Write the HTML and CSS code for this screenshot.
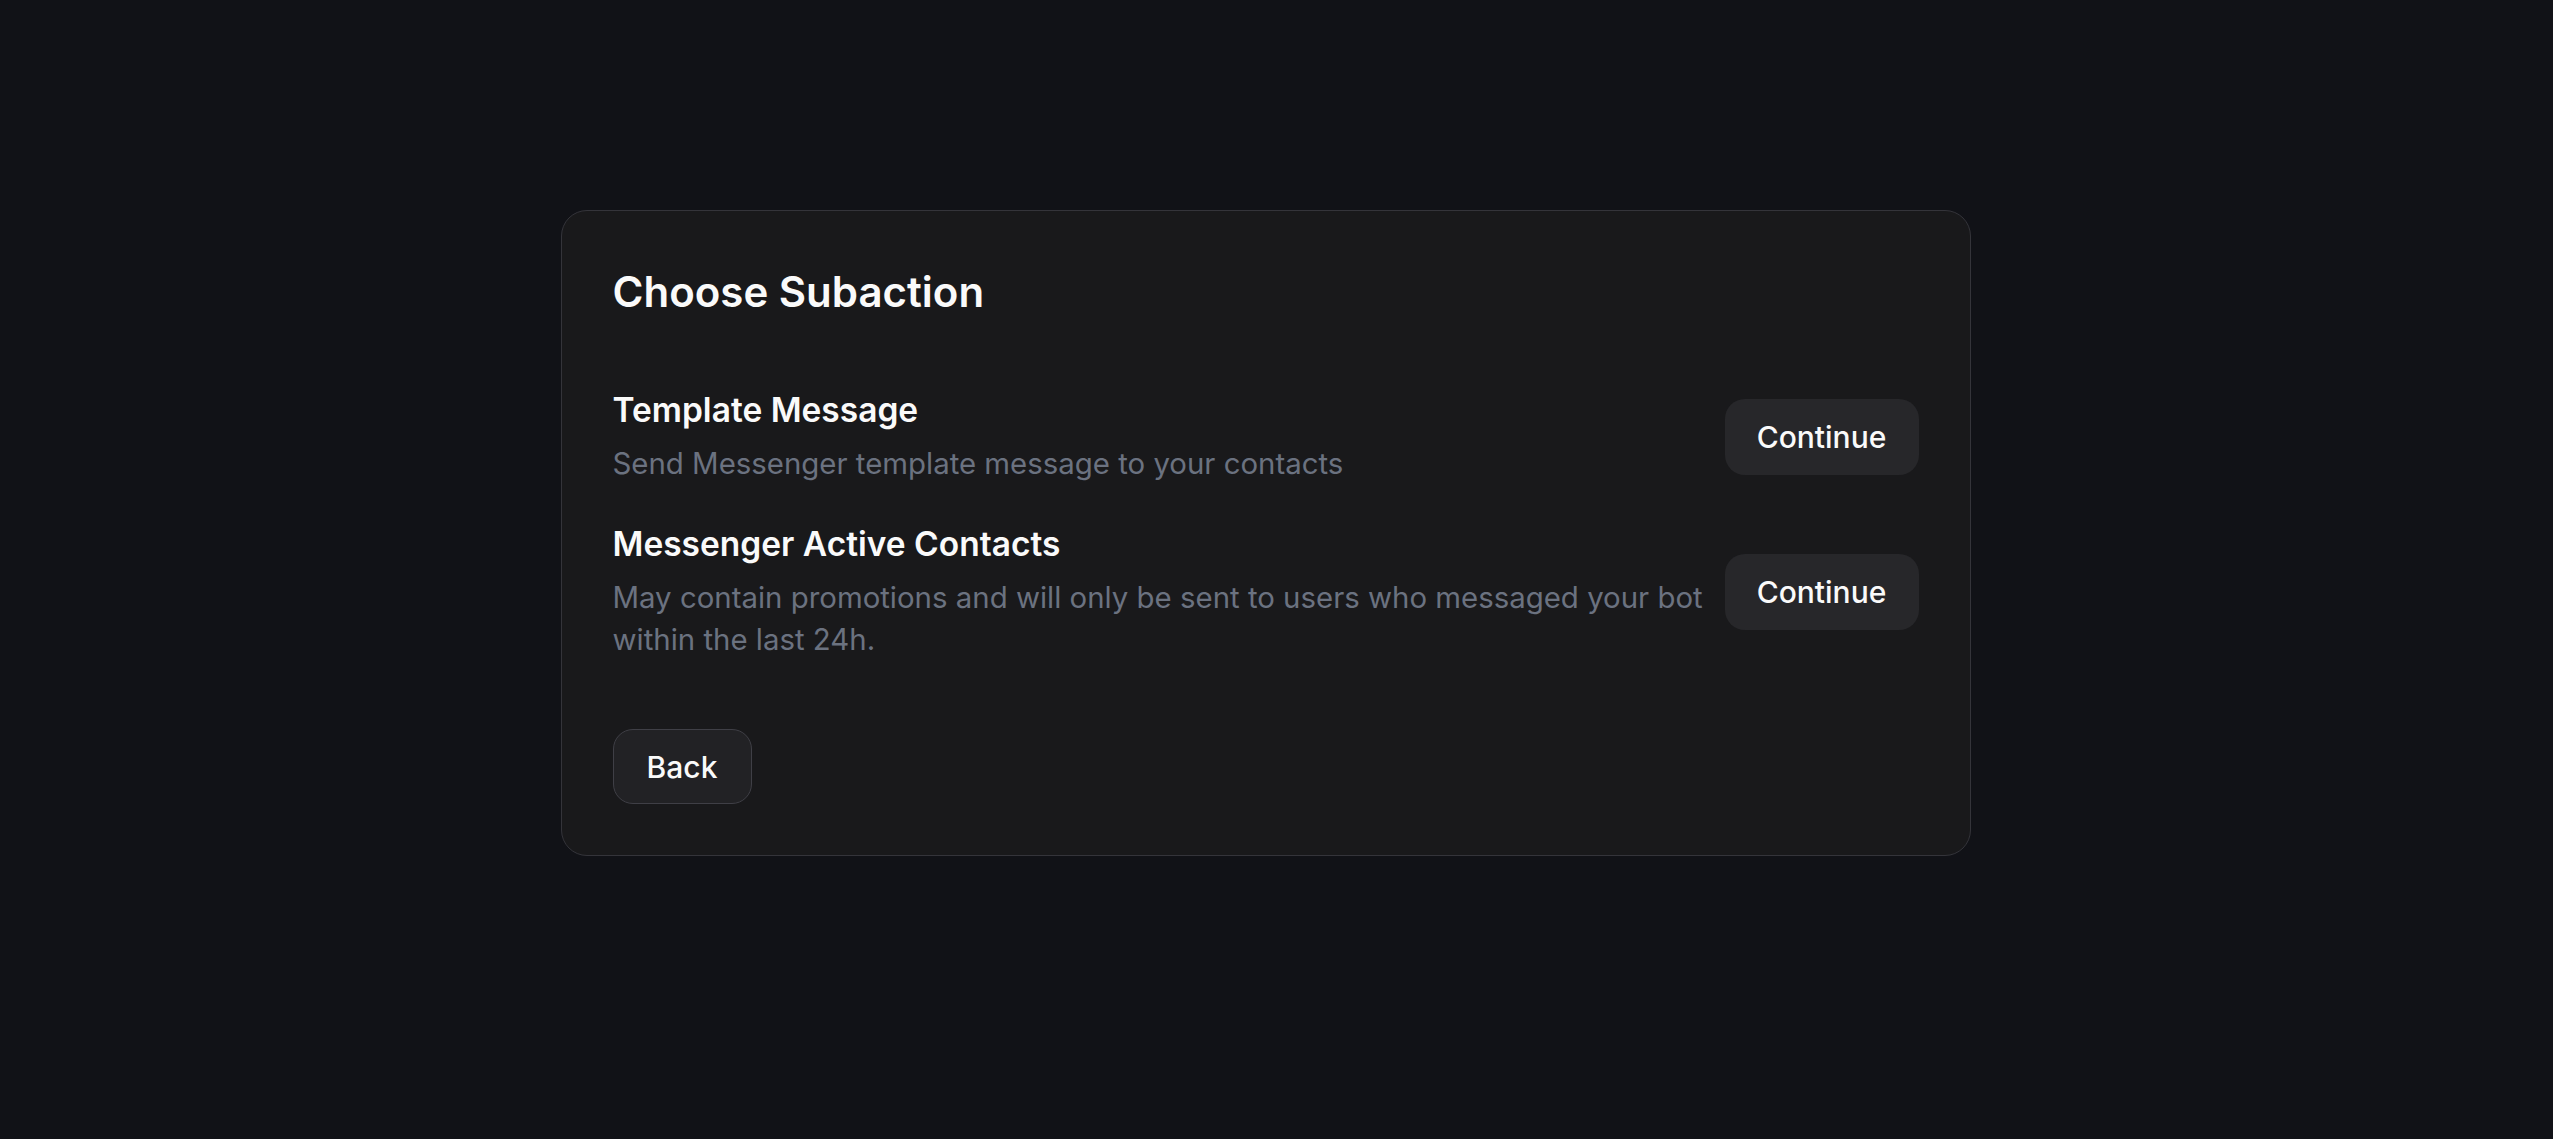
FILE: index.html
```html
<!DOCTYPE html>
<html lang="en">
    <head>
        <meta charset="UTF-8">
        <meta name="viewport" content="width=device-width, initial-scale=1.0">
        <title>Choose Subaction</title>
        <link rel="stylesheet" href="styles.css">
    </head>
    <body>
        <div class="page">
            <div class="card">
                <h1>Choose Subaction</h1>

                <div class="options">
                    <div class="option">
                        <div class="option-text">
                            <h2>Template Message</h2>
                            <p>Send Messenger template message to your contacts</p>
                        </div>
                        <button type="button" class="btn-continue">Continue</button>
                    </div>
                    <div class="option">
                        <div class="option-text">
                            <h2>Messenger Active Contacts</h2>
                            <p>May contain promotions and will only be sent to users who messaged your bot within the last 24h.</p>
                        </div>
                        <button type="button" class="btn-continue">Continue</button>
                    </div>
                </div>

                <button type="button" class="btn-back">Back</button>
            </div>
        </div>
    </body>
</html>
```

FILE: styles.css
```css
body, html {
    margin: 0;
    height: 100%;
    background-color: #111217;
    font-family: Inter, "Noto Sans", sans-serif;
}
.page {
    padding: 210px 22px 0 0;
}
.card {
    box-sizing: border-box;
    width: 1410px;
    margin: 0 auto;
    padding: 56px 51px 51px;
    background-color: #19191b;
    border: 1px solid #34343a;
    border-radius: 26px;
}
h1 {
    margin: 0;
    font-size: 42px;
    line-height: 50px;
    font-weight: 600;
    color: #fafafa;
}
.options {
    display: flex;
    flex-direction: column;
    gap: 37px;
    margin-top: 71px;
}
.option {
    display: flex;
    align-items: center;
    gap: 20px;
}
.option-text {
    flex: 1;
}
h2 {
    margin: 0;
    font-size: 33.5px;
    line-height: 44px;
    font-weight: 600;
    color: #fafafa;
}
p {
    margin: 11px 0 0;
    font-size: 29.4px;
    line-height: 42px;
    color: #6b7280;
}
button {
    font-family: inherit;
    font-size: 30px;
    font-weight: 500;
    color: #fafafa;
    cursor: pointer;
    border-radius: 20px;
    height: 76px;
}
.btn-continue {
    width: 194px;
    border: none;
    background-color: #27272a;
}
.btn-back {
    margin-top: 68px;
    width: 139px;
    height: 75px;
    border: 1px solid #3f3f46;
    background-color: #222225;
}
```
